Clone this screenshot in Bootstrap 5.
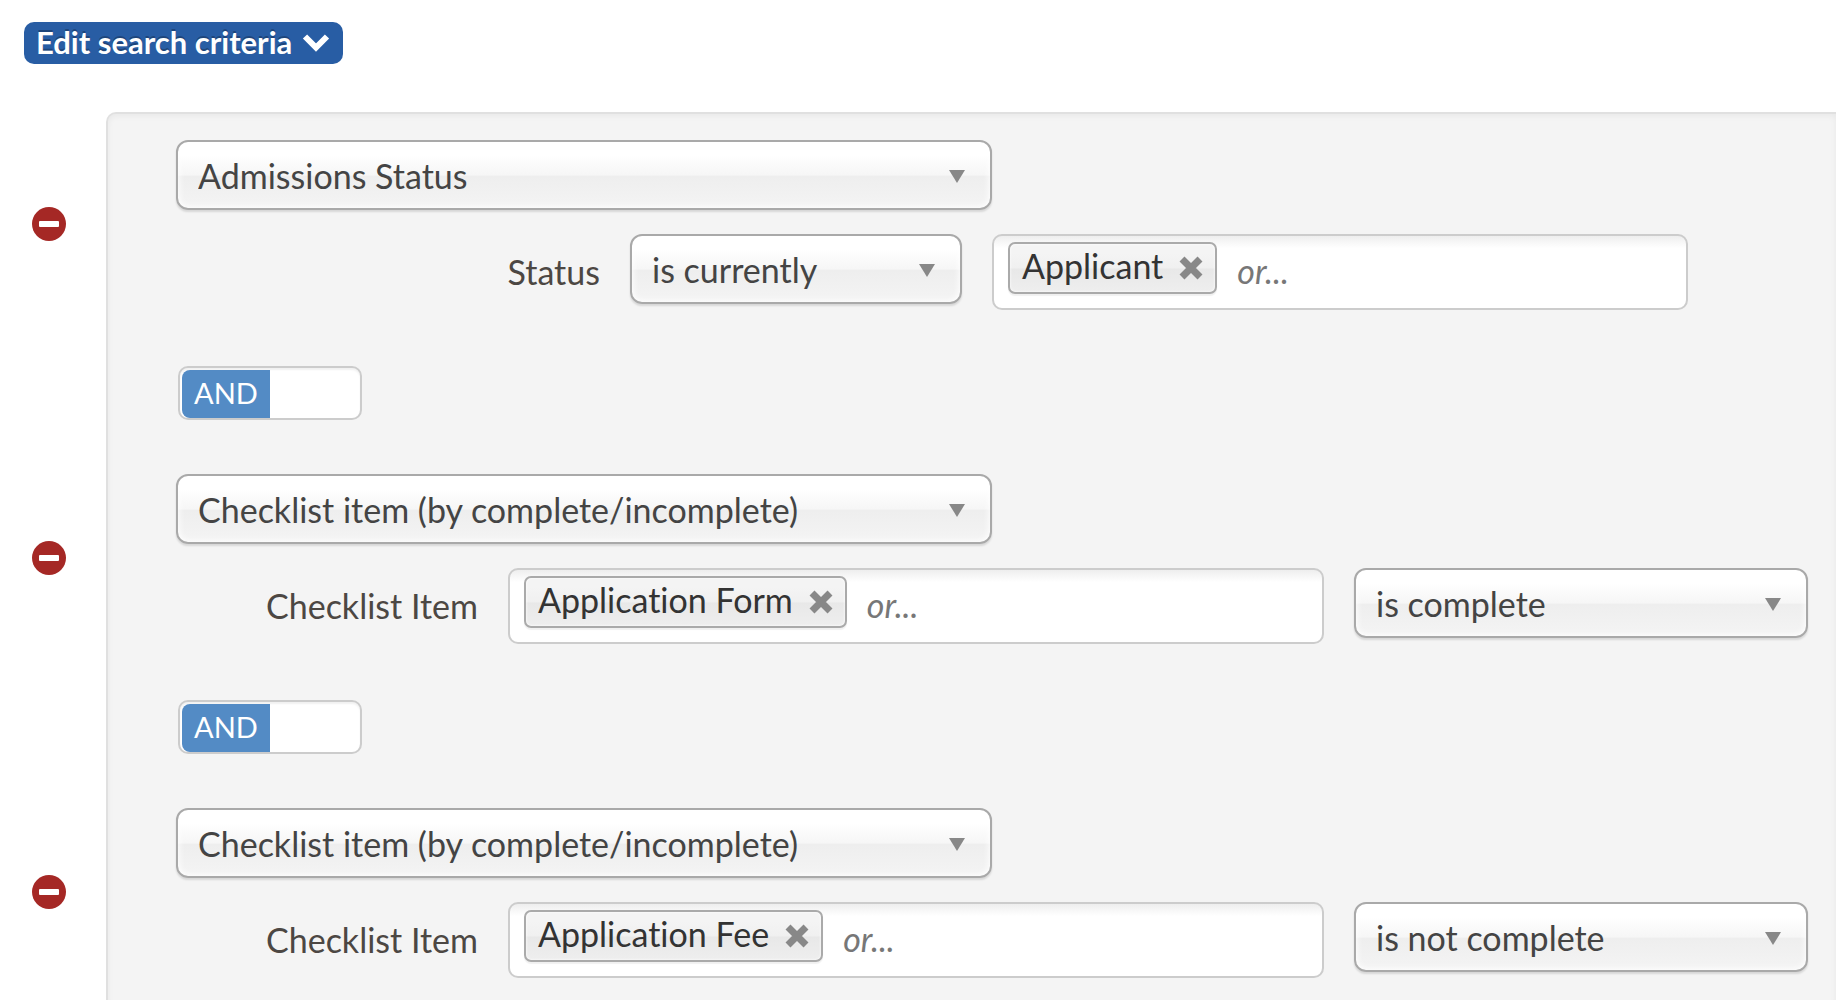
<!DOCTYPE html>
<html lang="en">
<head>
<meta charset="utf-8">
<meta name="viewport" content="width=device-width, initial-scale=1">
<title>Edit search criteria</title>
<link rel="stylesheet" href="https://cdn.jsdelivr.net/npm/bootstrap@5.3.0/dist/css/bootstrap.min.css">
<style>
body { font-family: Lato, "Noto Sans", sans-serif; font-size: 34px; line-height: 40px; font-variant-ligatures: none; color: #4c4743; background: #fff; overflow-x: hidden; }
.edit-btn { --bs-btn-color: #fff; --bs-btn-bg: #285da4; --bs-btn-hover-color: #fff; --bs-btn-hover-bg: #204c88;
  height: 42px; margin: 22px 24px 48px; padding: 0 13px 0 12px; gap: 10px; border: 0; border-radius: 10px;
  font-size: 31px; font-weight: 700; line-height: 40px; text-shadow: 0 -2px 0 rgba(0,0,0,.25); }
.edit-btn span { height: 42px; }
.criteria { background: #f4f4f4; border: 2px solid #e0e0e0; border-right: 0; border-radius: 10px 0 0 0; box-shadow: inset 0 2px 6px rgba(0,0,0,.05);
  margin-left: 106px; padding: 26px 28px 26px 68px; }
.rule { position: relative; }
.remove-btn { position: absolute; left: -144px; top: 67px; width: 34px; height: 34px; line-height: 1; }
.pick { height: 70px; padding: 2px 60px 0 20px; border: 2px solid #a9a9a9; border-radius: 12px; font-size: 34px; line-height: 40px; color: #444;
  background: url("data:image/svg+xml,%3Csvg xmlns='http://www.w3.org/2000/svg' viewBox='0 0 16 13'%3E%3Cpath d='M0 0h16L8 13z' fill='%23888'/%3E%3C/svg%3E") no-repeat right 25px top 28px / 16px 13px,
    linear-gradient(#fff 20%, #f6f6f6 50%, #eee 52%, #f4f4f4 100%);
  box-shadow: inset 0 0 6px 1px #fff, 0 2px 2px rgba(0,0,0,.12); }
.fields { gap: 30px; margin-top: 24px; }
.fields > label { padding-top: 18px; text-align: right; flex: none; }
.label-status { width: 424px; }
.label-item { width: 302px; }
.pick-status { width: 332px; }
.pick-item { width: 454px; flex: none; }
.status-values { margin-right: 120px; }
.token-box { height: 76px; padding: 6px 14px; gap: 20px; border: 2px solid #ccc; border-radius: 10px; background: #fff linear-gradient(#eee, #fff 12px) no-repeat; }
.token { height: 52px; padding: 0 12px; gap: 16px; border: 2px solid #aaa; border-radius: 7px; color: #333; white-space: nowrap;
  background: linear-gradient(#f4f4f4 20%, #f0f0f0 50%, #e8e8e8 52%, #eee); box-shadow: inset 0 0 3px #fff, 0 2px 1px rgba(0,0,0,.06); }
.token span { height: 44px; }
.token button { line-height: 1; }
.more { min-width: 0; height: 56px; border: 0; outline: 0; background: none; }
.more::placeholder { font-style: italic; color: #777; opacity: 1; }
.joiner { width: 184px; height: 54px; margin: 56px 2px 54px; padding: 2px; border: 2px solid #ccc; border-radius: 10px; background: #fff; overflow: hidden; box-shadow: inset 0 2px 2px rgba(0,0,0,.06); }
.joiner span { width: 88px; height: 48px; line-height: 46px; font-size: 29px; color: #fff; background: #538bc5; border-radius: 8px 0 0 8px; }
</style>
<script src="https://cdn.jsdelivr.net/npm/bootstrap@5.3.0/dist/js/bootstrap.bundle.min.js" defer></script>
</head>
<body>
<header class="d-flex">
  <button class="btn edit-btn d-inline-flex align-items-center" type="button"><span>Edit search criteria</span>
    <svg width="28" height="20" viewBox="0 0 28 20" aria-hidden="true"><path d="M3 3.500 14 14.500 25 3.500" fill="none" stroke="#fff" stroke-width="6"/></svg>
  </button>
</header>
<main class="criteria">
  <section class="rule">
    <button class="btn p-0 border-0 d-flex remove-btn" type="button" aria-label="Remove Admissions Status"><svg width="34" height="34" viewBox="0 0 34 34"><circle cx="17" cy="17" r="17" fill="#a52825"/><rect x="7" y="14" width="20" height="6" rx="1" fill="#fff"/></svg></button>
    <select class="pick form-select w-50" aria-label="Criterion 1"><option>Admissions Status</option></select>
    <div class="fields d-flex align-items-start">
      <label class="label-status" for="status-op">Status</label>
      <select class="pick pick-status form-select flex-shrink-0" id="status-op"><option>is currently</option></select>
      <div class="token-box status-values d-flex flex-grow-1">
        <div class="token d-flex align-items-center"><span>Applicant</span><button class="btn p-0 border-0 d-flex" type="button" aria-label="Remove Applicant"><svg width="24" height="24" viewBox="0 0 24 24"><path d="M3 3 21 21M21 3 3 21" stroke="#888" stroke-width="7"/></svg></button></div>
        <input class="more flex-fill p-0" type="text" placeholder="or..." aria-label="Add a status">
      </div>
    </div>
  </section>
  <button class="joiner d-block" type="button" role="switch" aria-checked="true"><span class="d-block text-center">AND</span></button>
  <section class="rule">
    <button class="btn p-0 border-0 d-flex remove-btn" type="button" aria-label="Remove Application Form rule"><svg width="34" height="34" viewBox="0 0 34 34"><circle cx="17" cy="17" r="17" fill="#a52825"/><rect x="7" y="14" width="20" height="6" rx="1" fill="#fff"/></svg></button>
    <select class="pick form-select w-50" aria-label="Criterion 2"><option>Checklist item (by complete/incomplete)</option></select>
    <div class="fields d-flex align-items-start">
      <label class="label-item" for="item-form">Checklist Item</label>
      <div class="token-box d-flex flex-grow-1">
        <div class="token d-flex align-items-center"><span>Application Form</span><button class="btn p-0 border-0 d-flex" type="button" aria-label="Remove Application Form"><svg width="24" height="24" viewBox="0 0 24 24"><path d="M3 3 21 21M21 3 3 21" stroke="#888" stroke-width="7"/></svg></button></div>
        <input class="more flex-fill p-0" type="text" id="item-form" placeholder="or...">
      </div>
      <select class="pick pick-item form-select" aria-label="Completion"><option>is complete</option><option>is not complete</option></select>
    </div>
  </section>
  <button class="joiner d-block" type="button" role="switch" aria-checked="true"><span class="d-block text-center">AND</span></button>
  <section class="rule">
    <button class="btn p-0 border-0 d-flex remove-btn" type="button" aria-label="Remove Application Fee rule"><svg width="34" height="34" viewBox="0 0 34 34"><circle cx="17" cy="17" r="17" fill="#a52825"/><rect x="7" y="14" width="20" height="6" rx="1" fill="#fff"/></svg></button>
    <select class="pick form-select w-50" aria-label="Criterion 3"><option>Checklist item (by complete/incomplete)</option></select>
    <div class="fields d-flex align-items-start">
      <label class="label-item" for="item-fee">Checklist Item</label>
      <div class="token-box d-flex flex-grow-1">
        <div class="token d-flex align-items-center"><span>Application Fee</span><button class="btn p-0 border-0 d-flex" type="button" aria-label="Remove Application Fee"><svg width="24" height="24" viewBox="0 0 24 24"><path d="M3 3 21 21M21 3 3 21" stroke="#888" stroke-width="7"/></svg></button></div>
        <input class="more flex-fill p-0" type="text" id="item-fee" placeholder="or...">
      </div>
      <select class="pick pick-item form-select" aria-label="Completion"><option>is not complete</option><option>is complete</option></select>
    </div>
  </section>
</main>
</body>
</html>
